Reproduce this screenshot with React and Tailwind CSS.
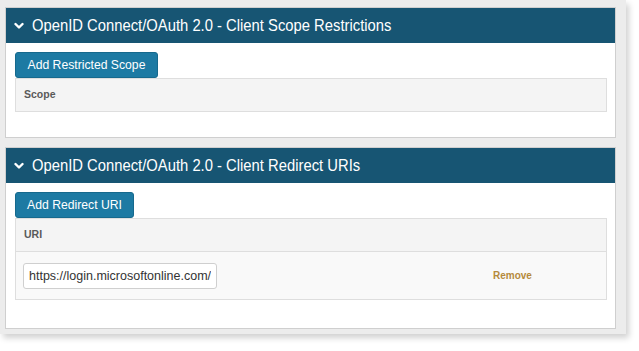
import React from 'react';

const Chevron = () => (
  <svg width="10" height="8" viewBox="0 0 10 8" className="shrink-0">
    <path d="M1.5 2 L5 5.5 L8.5 2" fill="none" stroke="white" strokeWidth="2.4" strokeLinecap="round" strokeLinejoin="round" />
  </svg>
);

const PanelHeader = ({ title }) => (
  <div className="h-[35px] bg-[#175573] flex items-center gap-[8px] pl-[8px] text-white text-[14.8px] leading-none">
    <Chevron />
    <span className="inline-block scale-y-[1.12]">{title}</span>
  </div>
);

const AddButton = ({ label, width }) => (
  <button className={`${width} h-[26px] bg-[#1d7aa3] text-white text-[12.2px] rounded-[3px] border border-[#16698d] flex items-center justify-center`}>
    {label}
  </button>
);

export default function App() {
  return (
    <div className="w-[639px] h-[351px] bg-white" style={{ fontFamily: '"Liberation Sans", Arial, sans-serif' }}>
      <div className="w-[626px] h-[334px] bg-[#ececec] pt-[7px] pl-[5px] pr-[10px] shadow-[3px_4px_6px_rgba(0,0,0,0.18)] flex flex-col gap-[9px]">
        {/* scope restrictions */}
        <section className="border border-[#cfcfcf] bg-white h-[131px]">
          <PanelHeader title="OpenID Connect/OAuth 2.0 - Client Scope Restrictions" />
          <div className="pt-[9px] pl-[9px] pr-[8px]">
            <AddButton label="Add Restricted Scope" width="w-[143px]" />
            <div className="border border-[#dedede] bg-[#f4f4f4] h-[34px] flex items-center pl-[8px] text-[10.5px] font-bold text-[#5a5a5a]">
              Scope
            </div>
          </div>
        </section>

        {/* redirect URIs */}
        <section className="border border-[#cfcfcf] bg-white h-[182px]">
          <PanelHeader title="OpenID Connect/OAuth 2.0 - Client Redirect URIs" />
          <div className="pt-[9px] pl-[9px] pr-[8px]">
            <AddButton label="Add Redirect URI" width="w-[119px]" />
            <div className="border border-[#dedede]">
              <div className="bg-[#f4f4f4] h-[33px] flex items-center pl-[8px] text-[10.5px] font-bold text-[#5a5a5a] border-b border-[#dedede]">
                URI
              </div>
              <div className="bg-[#f9f9f9] h-[47px] flex items-center pl-[7px]">
                <input
                  readOnly
                  value="https://login.microsoftonline.com/common/oauth2/nativeclient"
                  className="w-[194px] h-[26px] border border-[#cfcfcf] rounded-[3px] bg-white px-[5px] text-[12.5px] text-[#333] outline-none"
                />
                <span className="ml-[276px] text-[10px] font-bold text-[#b58a3c]">Remove</span>
              </div>
            </div>
          </div>
        </section>
      </div>
    </div>
  );
}
